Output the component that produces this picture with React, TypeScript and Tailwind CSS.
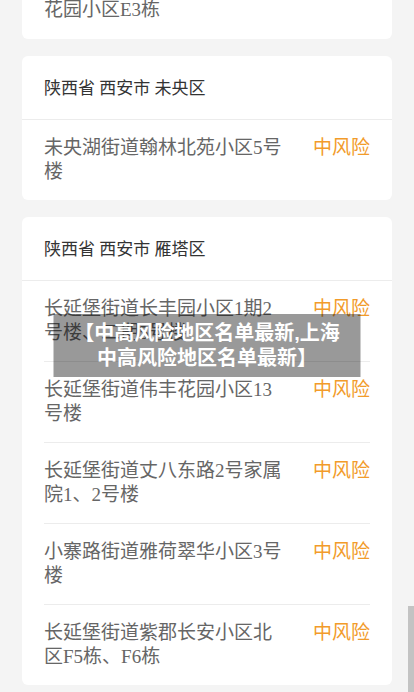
const serif = 'font-["Liberation_Serif","Noto_Sans_CJK_SC",serif]';

type Row = { name: string; level: string };

const weiyang: Row[] = [{ name: '未央湖街道翰林北苑小区5号楼', level: '中风险' }];

const yanta: Row[] = [
  { name: '长延堡街道长丰园小区1期2号楼、二期5号楼', level: '中风险' },
  { name: '长延堡街道伟丰花园小区13号楼', level: '中风险' },
  { name: '长延堡街道丈八东路2号家属院1、2号楼', level: '中风险' },
  { name: '小寨路街道雅荷翠华小区3号楼', level: '中风险' },
  { name: '长延堡街道紫郡长安小区北区F5栋、F6栋', level: '中风险' },
];

function RiskRow({ row, divider }: { row: Row; divider: boolean }) {
  return (
    <div className="px-[22px]">
      <div className={`flex items-start py-4 ${divider ? 'border-b border-[#ececec]' : ''}`}>
        <p className="w-[246px] text-[19px] leading-6 text-[#666]">{row.name}</p>
        <span className="ml-auto text-[19px] leading-6 text-[#f29b2a]">{row.level}</span>
      </div>
    </div>
  );
}

function AreaCard({ title, rows }: { title: string; rows: Row[] }) {
  return (
    <div className="bg-white rounded-md">
      <div className="h-[64px] flex items-center pt-[3px] px-[22px] border-b border-[#ececec] text-[17px] text-[#333]">
        {title}
      </div>
      {rows.map((r, i) => (
        <RiskRow key={r.name} row={r} divider={i < rows.length - 1} />
      ))}
    </div>
  );
}

export default function App() {
  return (
    <div className={`relative h-[692px] overflow-hidden bg-[#f4f4f4] ${serif}`}>
      <div className="px-[22px] flex flex-col gap-[17px]">
        {/* tail of the previous card */}
        <div className="bg-white rounded-md -mt-[26px] px-[22px] pt-0 pb-[17px]">
          <p className="text-[19px] leading-6 text-[#666]">
            <span className="block h-6"></span>
            花园小区E3栋
          </p>
        </div>
        <AreaCard title="陕西省 西安市 未央区" rows={weiyang} />
        <AreaCard title="陕西省 西安市 雁塔区" rows={yanta} />
      </div>

      {/* title overlay */}
      <div className="absolute top-[314px] left-1/2 -translate-x-1/2 w-[307px] h-[63px] bg-black/40 flex items-center justify-center">
        <p className='text-center text-white font-bold text-[20px] leading-[25px] font-["Liberation_Sans","Noto_Sans_CJK_SC",sans-serif]'>
          【中高风险地区名单最新,上海
          <br />
          中高风险地区名单最新】
        </p>
      </div>

      {/* scrollbar thumb */}
      <div className="absolute right-0 top-[606px] w-[6px] h-[86px] bg-[#c3c3c3]"></div>
    </div>
  );
}
